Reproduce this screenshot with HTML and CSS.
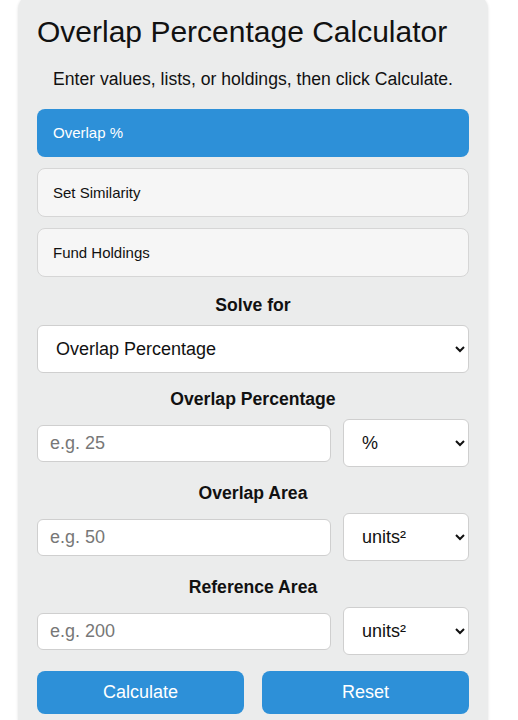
FILE: index.html
```html
<!DOCTYPE html>
<html lang="en">
<head>
  <meta charset="UTF-8">
  <title>Overlap Percentage Calculator</title>
  <meta name="viewport" content="width=device-width, initial-scale=1.0">
  <link rel="stylesheet" href="styles.css">
</head>
<body>
  <div class="card">
    <h1>Overlap Percentage Calculator</h1>
    <p class="intro">Enter values, lists, or holdings, then click Calculate.</p>

    <div class="tabs">
      <button class="tab active">Overlap %</button>
      <button class="tab">Set Similarity</button>
      <button class="tab">Fund Holdings</button>
    </div>

    <div class="group solve">
      <label for="solve">Solve for</label>
      <select id="solve" class="wide">
        <option>Overlap Percentage</option>
        <option>Overlap Area</option>
        <option>Reference Area</option>
      </select>
    </div>

    <div class="group">
      <label for="pct">Overlap Percentage</label>
      <div class="row">
        <input id="pct" type="text" placeholder="e.g. 25">
        <select class="unit"><option>%</option></select>
      </div>
    </div>

    <div class="group">
      <label for="area">Overlap Area</label>
      <div class="row">
        <input id="area" type="text" placeholder="e.g. 50">
        <select class="unit"><option>units²</option></select>
      </div>
    </div>

    <div class="group">
      <label for="ref">Reference Area</label>
      <div class="row">
        <input id="ref" type="text" placeholder="e.g. 200">
        <select class="unit"><option>units²</option></select>
      </div>
    </div>

    <div class="actions">
      <button class="btn">Calculate</button>
      <button class="btn">Reset</button>
    </div>
  </div>
</body>
</html>
```

FILE: styles.css
```css
body { margin: 0; background: #fff; font-family: "Liberation Sans", Arial, sans-serif; color: #111; }
.card { width: 432px; margin: -6px 0 0 18px; padding: 21px 19px 20px; background: #ebecec; border-radius: 16px; box-shadow: 0 0 3px rgba(0,0,0,0.12); }
h1 { margin: 0; font-size: 30px; font-weight: normal; line-height: 34px; color: #111; }
.intro { margin: 20px 0 19px; font-size: 17.6px; line-height: 21px; text-align: center; }
.tabs { display: flex; flex-direction: column; gap: 11px; }
.tab { display: block; width: 100%; text-align: left; padding: 15px; font-family: inherit; font-size: 15px; line-height: 17px; color: #111; background: #f6f6f6; border: 1px solid #d6d6d6; border-radius: 8px; }
.tab.active { padding: 16px; line-height: 16px; background: #2d90d8; border: none; color: #fff; }
.group { margin-top: 16px; }
.group label { display: block; text-align: center; font-size: 17.6px; font-weight: bold; line-height: 20px; margin-bottom: 10px; }
.solve { margin-top: 18px; }
.row { display: flex; align-items: center; gap: 12px; }
input, select { font-family: inherit; font-size: 18px; color: #111; background: #fff; border: 1px solid #cfcfcf; border-radius: 6px; box-sizing: border-box; }
input { flex: 1; min-width: 0; height: 37px; padding: 0 12px; }
input::placeholder { color: #777; }
select { height: 48px; padding: 0 10px 0 14px; }
.wide { width: 100%; }
.unit { width: 126px; }
.actions { display: flex; gap: 18px; margin-top: 16px; }
.btn { flex: 1; height: 43px; font-family: inherit; font-size: 18px; color: #fff; background: #2d90d8; border: none; border-radius: 8px; }
```
